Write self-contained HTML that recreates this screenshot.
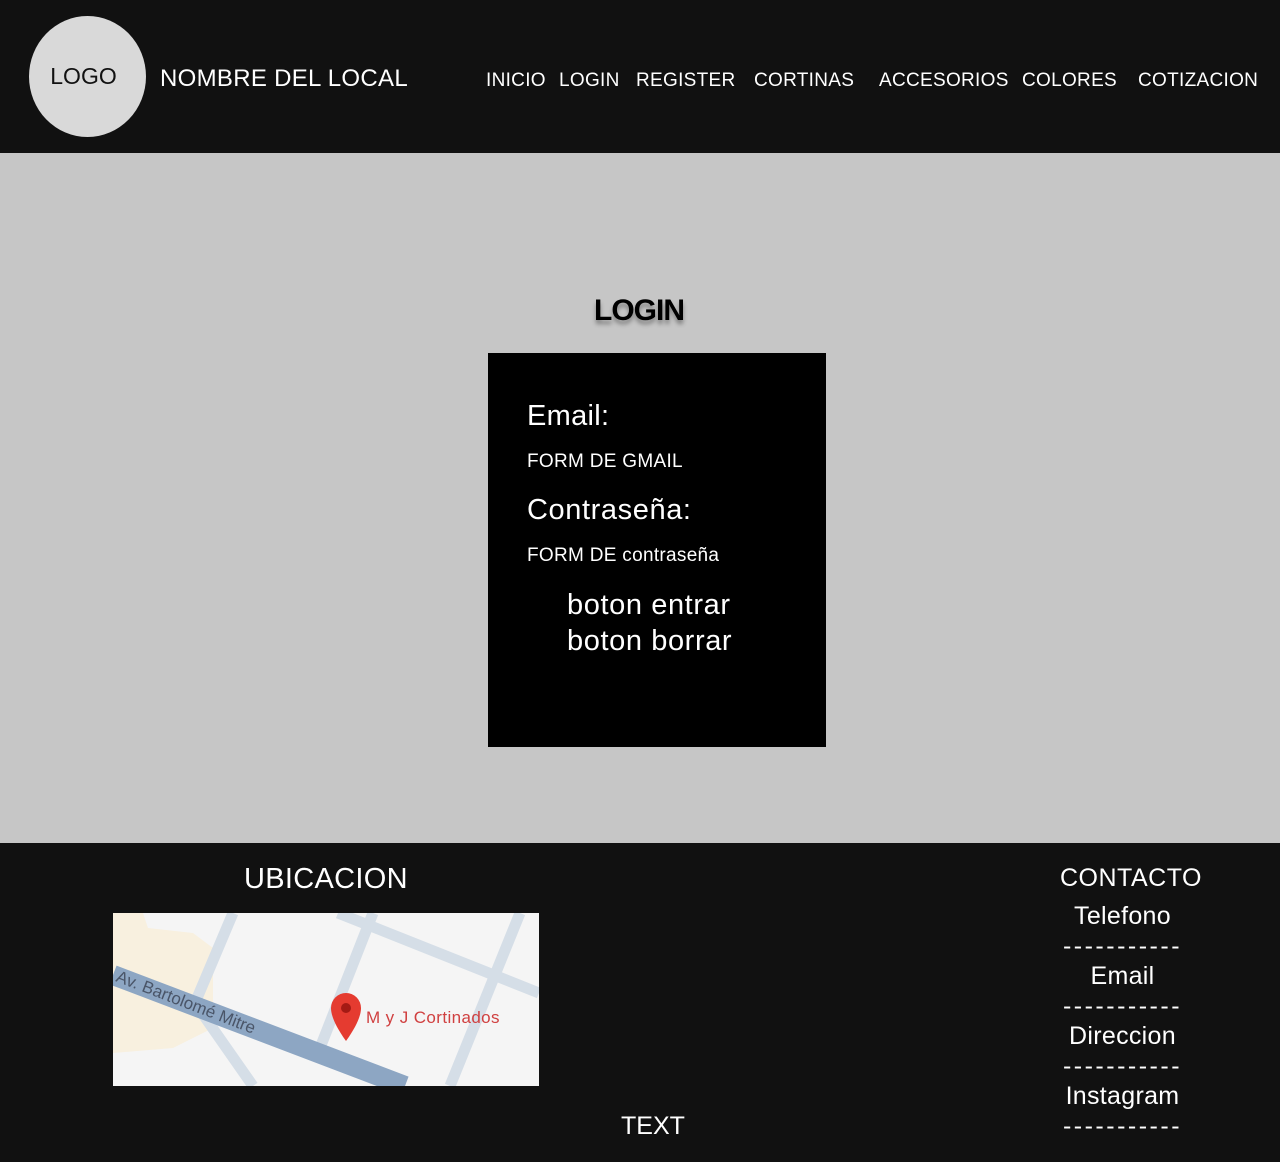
<!DOCTYPE html>
<html><head><meta charset="utf-8"><style>
*{margin:0;padding:0;box-sizing:border-box}
body{width:1280px;height:1162px;background:#c6c6c6;font-family:"Liberation Sans",sans-serif;position:relative;overflow:hidden}
.hdr{position:absolute;left:0;top:0;width:1280px;height:153px;background:#111}
.logo{position:absolute;left:29px;top:16px;width:117px;height:121px;border-radius:50%;background:#d9d9d9;color:#111;font-size:23px;line-height:121px;text-align:center;padding-right:8px}
.t{position:absolute;color:#fff;white-space:nowrap}
.nav{font-size:19px;top:70px;letter-spacing:0.3px}
.box{position:absolute;left:488px;top:353px;width:338px;height:394px;background:#000}
.ftr{position:absolute;left:0;top:843px;width:1280px;height:319px;background:#111}
.d{letter-spacing:2.5px}
</style></head><body>
<div class="hdr">
<div class="logo">LOGO</div>
<div class="t" style="left:160px;top:65px;font-size:24px;letter-spacing:0.3px">NOMBRE DEL LOCAL</div>
<div class="t nav" style="left:486px">INICIO</div>
<div class="t nav" style="left:559px">LOGIN</div>
<div class="t nav" style="left:636px">REGISTER</div>
<div class="t nav" style="left:754px">CORTINAS</div>
<div class="t nav" style="left:879px">ACCESORIOS</div>
<div class="t nav" style="left:1022px">COLORES</div>
<div class="t nav" style="left:1138px">COTIZACION</div>
</div>
<div class="t" style="left:594px;top:294px;font-size:30px;font-weight:bold;color:#000;text-shadow:0 4px 4px rgba(0,0,0,.35);letter-spacing:-1px">LOGIN</div>
<div class="box">
<div class="t" style="left:39px;top:47px;font-size:29px;letter-spacing:0.3px">Email:</div>
<div class="t" style="left:39px;top:98px;font-size:19px;letter-spacing:0.3px">FORM DE GMAIL</div>
<div class="t" style="left:39px;top:141px;font-size:29px;letter-spacing:0.6px">Contraseña:</div>
<div class="t" style="left:39px;top:192px;font-size:19px;letter-spacing:0.3px">FORM DE contraseña</div>
<div class="t" style="left:79px;top:234px;font-size:29px;line-height:36px;letter-spacing:0.6px">boton entrar<br>boton borrar</div>
</div>
<div class="ftr">
<div class="t" style="left:244px;top:20px;font-size:29px;letter-spacing:0.3px">UBICACION</div>
<svg style="position:absolute;left:113px;top:70px" width="426" height="173" viewBox="0 0 426 173">
<rect width="426" height="173" fill="#f5f5f5"/>
<path d="M0 0 L0 140 L60 135 L100 115 L100 35 L80 20 L35 15 L30 0 Z" fill="#f8f0df"/>
<g stroke="#d5dee7" stroke-width="11" fill="none">
<path d="M120 0 L82 90 L140 173"/>
<path d="M260 0 L205 140"/>
<path d="M407 0 L337 173"/>
<path d="M225 0 L426 80"/>
</g>
<path d="M0 62 L292 173" stroke="#8da6c3" stroke-width="20"/>
<text x="2" y="68" font-size="17" fill="#4a5568" transform="rotate(21 2 68)" font-family="Liberation Sans,sans-serif">Av. Bartolomé Mitre</text>
<path d="M233 128 C220 110 218 100 218 95 A15 15 0 0 1 248 95 C248 100 246 110 233 128Z" fill="#e53b30"/>
<circle cx="233" cy="95" r="5" fill="#a41a14"/>
<text x="253" y="110" font-size="17" fill="#d04040" font-family="Liberation Sans,sans-serif" letter-spacing="0.4">M y J Cortinados</text>
</svg>
<div class="t" style="left:621px;top:269px;font-size:25px">TEXT</div>
<div class="t" style="left:1060px;top:21px;font-size:25px;letter-spacing:0.5px">CONTACTO</div>
<div class="t" style="left:1060px;top:58px;font-size:25px;width:125px;text-align:center;line-height:30px;letter-spacing:0.3px">Telefono<br><span class="d">-----------</span><br>Email<br><span class="d">-----------</span><br>Direccion<br><span class="d">-----------</span><br>Instagram<br><span class="d">-----------</span></div>
</div>
</body></html>
